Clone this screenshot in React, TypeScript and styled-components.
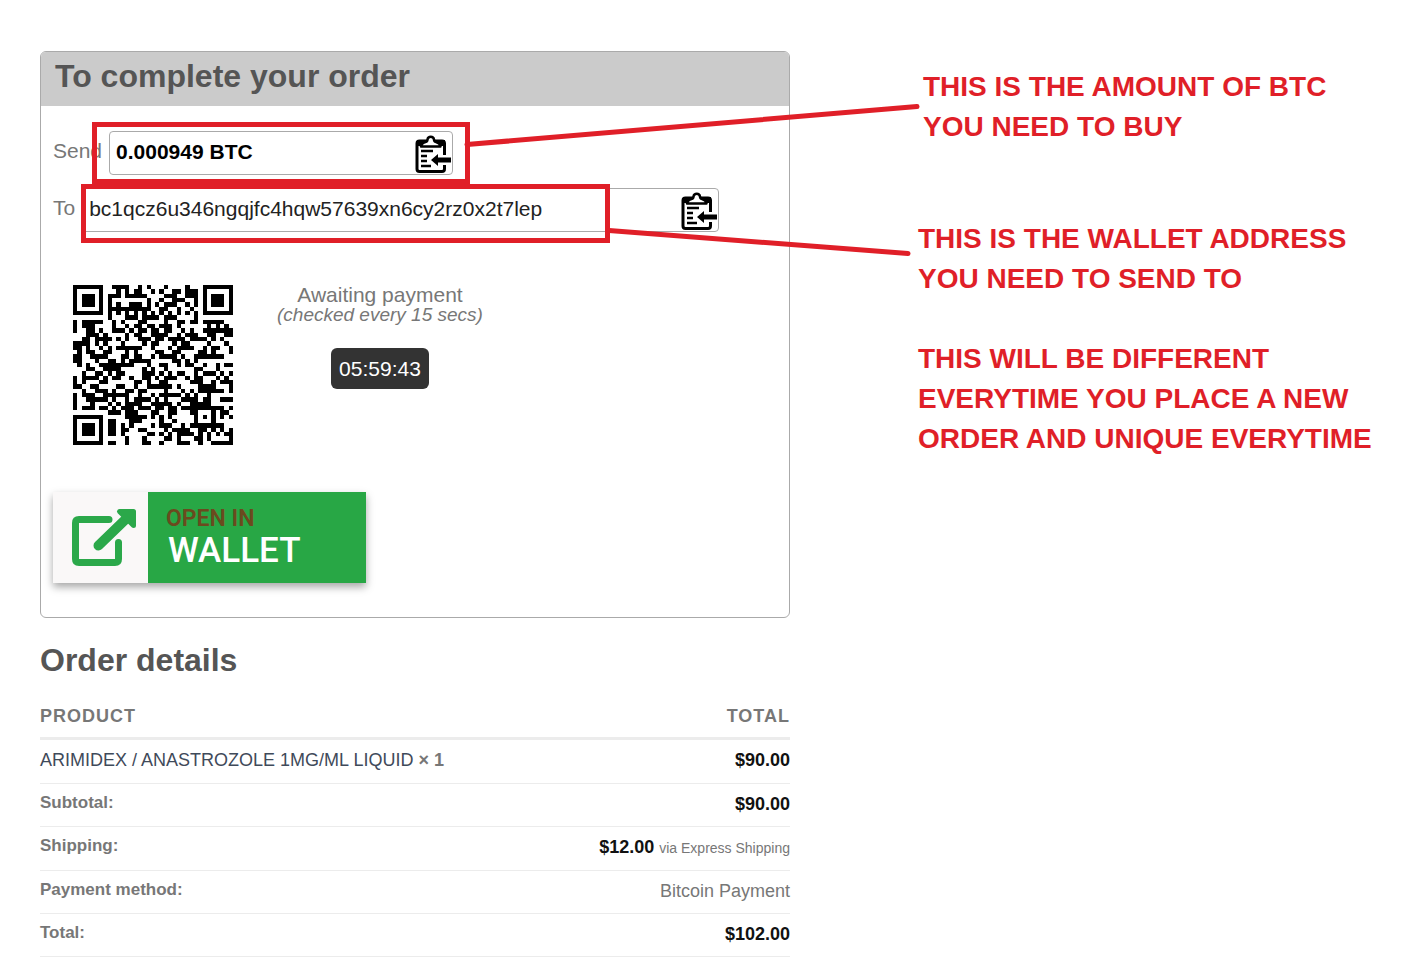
import React from 'react';
import styled, { createGlobalStyle } from 'styled-components';

const GlobalStyle = createGlobalStyle`
  *, *::before, *::after { box-sizing: border-box; }
  body {
    margin: 0;
    background: #fff;
    color: #777;
    font-family: "Liberation Sans", Arial, Helvetica, sans-serif;
  }
`;

const Page = styled.main`
  position: relative;
  display: flex;
  align-items: flex-start;
  gap: 128px;
  padding: 51px 0 10px 40px;
`;

const OrderColumn = styled.div`
  flex: 0 1 750px;
  min-width: 0;
`;

const Card = styled.section`
  border: 1px solid #aaa;
  border-radius: 6px;
  overflow: hidden;
`;

const Heading = styled.h2`
  margin: 0;
  font-size: 32px;
  line-height: 36px;
  font-weight: 700;
  color: #555;
`;

const CardHeader = styled.header`
  padding: 6px 14px 12px;
  background: #cbcbcb;
`;

const CardBody = styled.div`
  padding: 25px 12px 34px;
`;

const FieldRow = styled.div`
  display: flex;
  align-items: center;
  gap: 7px;
  margin-bottom: 13px;
`;

const FieldLabel = styled.label`
  font-size: 21px;
  line-height: 24px;
  padding-bottom: 4px;
`;

const FieldBox = styled.div<{ $width: number }>`
  display: flex;
  align-items: center;
  flex: 0 1 ${(p) => p.$width}px;
  min-width: 0;
  height: 44px;
  border: 1px solid #aaa;
  border-radius: 4px;
`;

const FieldInput = styled.input<{ $strong?: boolean }>`
  flex: 1;
  min-width: 0;
  height: 42px;
  border: 0;
  padding: 0 0 3px 6px;
  background: transparent;
  color: ${(p) => (p.$strong ? '#000' : '#222')};
  font: ${(p) => (p.$strong ? 700 : 400)} 21px "Liberation Sans", Arial, sans-serif;
`;

const CopyButton = styled.button`
  display: flex;
  border: 0;
  padding: 2px 0 0;
  background: none;
  cursor: pointer;
`;

const PaymentRow = styled.div`
  display: flex;
  align-items: flex-start;
  gap: 44px;
  padding: 40px 20px 47px;
`;

const Status = styled.div`
  display: flex;
  flex-direction: column;
  align-items: center;
  font-size: 21px;
  line-height: 20px;

  em { font-size: 19px; }
`;

const Countdown = styled.time`
  margin-top: 23px;
  padding: 11px 8px 10px;
  border-radius: 6px;
  background: #333;
  color: #fff;
`;

const WalletLink = styled.a`
  display: inline-flex;
  vertical-align: top;
  height: 91px;
  background: #28a745;
  box-shadow: 0 4px 8px rgba(0, 0, 0, 0.35);
  text-decoration: none;
  font-family: Roboto, sans-serif;
  font-weight: 500;
`;

const WalletIcon = styled.span`
  display: flex;
  padding: 16px 11px 0 18px;
  background: #faf8f8;
`;

const WalletText = styled.span`
  display: flex;
  flex-direction: column;
  width: 218px;
  padding: 15px 18px;
`;

const WalletSmall = styled.span`
  font-size: 23px;
  line-height: 24px;
  font-weight: 600;
  color: #6b4a1e;
`;

const WalletBig = styled.span`
  padding-left: 2px;
  font-size: 35px;
  line-height: 40px;
  color: #fff;
`;

const Details = styled.section`
  padding-top: 24px;
`;

const Table = styled.table`
  width: 100%;
  margin-top: 18px;
  border-collapse: separate;
  border-spacing: 0;
  font-size: 18px;
  line-height: 22px;

  td, th { vertical-align: top; }
`;

const HeadCell = styled.th<{ $end?: boolean }>`
  padding: 9px 0 10px;
  border-bottom: 3px solid #ececec;
  text-align: ${(p) => (p.$end ? 'right' : 'left')};
  letter-spacing: 1px;
`;

const ItemCell = styled.td<{ $first?: boolean }>`
  padding: 9px 0 ${(p) => (p.$first ? 12 : 11)}px;
  border-bottom: 1px solid #ececec;

  a { color: #3f4a5a; text-decoration: none; }
`;

const LabelCell = styled.th`
  padding: 8px 0 12px;
  border-bottom: 1px solid #ececec;
  text-align: left;
  font-size: 17px;
`;

const ValueCell = styled(ItemCell)`
  text-align: right;

  b { color: #111; }
  small { font-size: 14px; }
`;

const Notes = styled.aside`
  flex: 1 1 0;
  min-width: 0;
  padding-top: 16px;
  font-weight: 700;
  font-size: 28px;
  line-height: 40px;
  color: #e01f28;
  white-space: nowrap;
`;

const Note = styled.p<{ $gap: number; $indent?: boolean }>`
  margin: 0 0 ${(p) => p.$gap}px;
  padding-left: ${(p) => (p.$indent ? 5 : 0)}px;
`;

const Markup = styled.svg`
  position: absolute;
  top: 0;
  left: 0;
  pointer-events: none;
`;

/* QR version 5, error correction level M, mask 2. */
const SIZE = 37;
const DATA_WORDS = 86;
const BLOCK_WORDS = 43;
const EC_WORDS = 24;
const FORMAT_BITS = '101111001111100';

function multiply(a: number, b: number) {
  let product = 0;
  for (let i = 7; i >= 0; i--) {
    product = (product << 1) ^ ((product >>> 7) * 0x11d);
    product ^= ((b >>> i) & 1) * a;
  }
  return product;
}

function errorWords(data: number[]) {
  const divisor: number[] = new Array(EC_WORDS).fill(0);
  divisor[EC_WORDS - 1] = 1;
  let root = 1;
  for (let i = 0; i < EC_WORDS; i++) {
    for (let j = 0; j < EC_WORDS; j++) {
      divisor[j] = multiply(divisor[j], root);
      if (j + 1 < EC_WORDS) divisor[j] ^= divisor[j + 1];
    }
    root = multiply(root, 2);
  }
  const rest: number[] = new Array(EC_WORDS).fill(0);
  data.forEach((word) => {
    const factor = word ^ (rest.shift() as number);
    rest.push(0);
    divisor.forEach((d, i) => { rest[i] ^= multiply(d, factor); });
  });
  return rest;
}

function encodeQr(text: string) {
  let bits = '0100' + text.length.toString(2).padStart(8, '0');
  for (const ch of text) bits += ch.charCodeAt(0).toString(2).padStart(8, '0');
  bits += '0000';
  const words: number[] = [];
  for (let i = 0; i < bits.length; i += 8) words.push(parseInt(bits.slice(i, i + 8), 2));
  for (let pad = 0xec; words.length < DATA_WORDS; pad ^= 0xec ^ 0x11) words.push(pad);

  const blocks = [words.slice(0, BLOCK_WORDS), words.slice(BLOCK_WORDS)];
  const checks = blocks.map(errorWords);
  const stream: number[] = [];
  for (let i = 0; i < BLOCK_WORDS; i++) blocks.forEach((b) => stream.push(b[i]));
  for (let i = 0; i < EC_WORDS; i++) checks.forEach((b) => stream.push(b[i]));

  const grid: (boolean | null)[][] = Array.from({ length: SIZE }, () => new Array(SIZE).fill(null));
  const set = (x: number, y: number, on: boolean) => {
    if (x >= 0 && y >= 0 && x < SIZE && y < SIZE) grid[y][x] = on;
  };
  for (let i = 0; i < SIZE; i++) {
    set(6, i, i % 2 === 0);
    set(i, 6, i % 2 === 0);
  }
  [[3, 3], [33, 3], [3, 33]].forEach(([cx, cy]) => {
    for (let dy = -4; dy <= 4; dy++) {
      for (let dx = -4; dx <= 4; dx++) {
        const d = Math.max(Math.abs(dx), Math.abs(dy));
        set(cx + dx, cy + dy, d !== 2 && d !== 4);
      }
    }
  });
  for (let dy = -2; dy <= 2; dy++) {
    for (let dx = -2; dx <= 2; dx++) {
      set(30 + dx, 30 + dy, Math.max(Math.abs(dx), Math.abs(dy)) !== 1);
    }
  }
  const format = (i: number) => FORMAT_BITS[14 - i] === '1';
  for (let i = 0; i <= 5; i++) set(8, i, format(i));
  set(8, 7, format(6));
  set(8, 8, format(7));
  set(7, 8, format(8));
  for (let i = 9; i < 15; i++) set(14 - i, 8, format(i));
  for (let i = 0; i < 8; i++) set(SIZE - 1 - i, 8, format(i));
  for (let i = 8; i < 15; i++) set(8, SIZE - 15 + i, format(i));
  set(8, SIZE - 8, true);

  let n = 0;
  for (let right = SIZE - 1; right >= 1; right -= 2) {
    if (right === 6) right = 5;
    const up = ((right + 1) & 2) === 0;
    for (let v = 0; v < SIZE; v++) {
      const y = up ? SIZE - 1 - v : v;
      for (const x of [right, right - 1]) {
        if (grid[y][x] !== null) continue;
        const bit = n < stream.length * 8 && ((stream[n >>> 3] >>> (7 - (n & 7))) & 1) === 1;
        grid[y][x] = bit !== (x % 3 === 0);
        n++;
      }
    }
  }
  return grid;
}

function QrCode({ value }: { value: string }) {
  const path = encodeQr(value)
    .map((row, y) => row.map((cell, x) => (cell ? `M${x} ${y}h1v1h-1z` : '')).join(''))
    .join('');
  return (
    <svg width="160" height="160" viewBox="0 0 37 37" role="img" aria-label="Payment QR code" shapeRendering="crispEdges">
      <path d={path} fill="#000" />
    </svg>
  );
}

function ClipboardIcon() {
  return (
    <svg width="37" height="38" viewBox="0 0 37 38" fill="none" aria-hidden="true">
      <path d="M29.500 30v4q0 2.500-2.500 2.500H4.500Q2 36.500 2 34V8.500Q2 6 4.500 6H27q2.500 0 2.500 2.500V20" stroke="#000" strokeWidth="3" />
      <path d="M2 5h8v6H2zM21 5h9v6h-9z" fill="#000" />
      <path d="M6 11.500q.5-3.500 4.500-4.500q2-.5 2-2.500a3.300 3.300 0 0 1 6.500 0q0 2 2 2.500q4 1 4.500 4.500z" fill="#fff" stroke="#000" strokeWidth="2.500" strokeLinejoin="round" />
      <path d="M6 16h12M6 21h6M6 26h6M6 31h10" stroke="#000" strokeWidth="2.300" />
      <path d="M16 25l7-6v3.500h13v5H23V31z" fill="#000" />
    </svg>
  );
}

function OpenIcon() {
  return (
    <svg width="66" height="59" viewBox="0 0 66 59" fill="none" aria-hidden="true">
      <path d="M38 11.500H8q-3.500 0-3.500 3.500v36q0 3.500 3.500 3.500h36q3.500 0 3.500-3.500V34.500" stroke="#2ba84a" strokeWidth="7" strokeLinecap="round" />
      <path d="M27.500 37.500L56 10" stroke="#2ba84a" strokeWidth="10" strokeLinecap="round" />
      <path d="M48.500 3.500H62.500V17.500z" fill="#2ba84a" stroke="#2ba84a" strokeWidth="5" strokeLinejoin="round" />
    </svg>
  );
}

const AMOUNT = '0.000949';
const ADDRESS = 'bc1qcz6u346ngqjfc4hqw57639xn6cy2rz0x2t7lep';
const PAYMENT_URI = `bitcoin:${ADDRESS}?amount=${AMOUNT}`;

const TOTALS = [
  { label: 'Subtotal:', amount: '$90.00' },
  { label: 'Shipping:', amount: '$12.00', note: 'via Express Shipping' },
  { label: 'Payment method:', text: 'Bitcoin Payment' },
  { label: 'Total:', amount: '$102.00' },
];

export default function App() {
  return (
    <>
      <GlobalStyle />
      <Page>
        <OrderColumn>
          <Card>
            <CardHeader>
              <Heading>To complete your order</Heading>
            </CardHeader>
            <CardBody>
              <FieldRow>
                <FieldLabel htmlFor="amount">Send</FieldLabel>
                <FieldBox $width={344}>
                  <FieldInput id="amount" $strong readOnly defaultValue={`${AMOUNT} BTC`} />
                  <CopyButton type="button" aria-label="Copy amount"><ClipboardIcon /></CopyButton>
                </FieldBox>
              </FieldRow>
              <FieldRow>
                <FieldLabel htmlFor="address">To</FieldLabel>
                <FieldBox $width={637}>
                  <FieldInput id="address" readOnly defaultValue={ADDRESS} />
                  <CopyButton type="button" aria-label="Copy address"><ClipboardIcon /></CopyButton>
                </FieldBox>
              </FieldRow>
              <PaymentRow>
                <QrCode value={PAYMENT_URI} />
                <Status>
                  <span>Awaiting payment</span>
                  <em>(checked every 15 secs)</em>
                  <Countdown>05:59:43</Countdown>
                </Status>
              </PaymentRow>
              <WalletLink href={PAYMENT_URI}>
                <WalletIcon><OpenIcon /></WalletIcon>
                <WalletText>
                  <WalletSmall>OPEN IN</WalletSmall>
                  <WalletBig>WALLET</WalletBig>
                </WalletText>
              </WalletLink>
            </CardBody>
          </Card>
          <Details>
            <Heading>Order details</Heading>
            <Table>
              <thead>
                <tr>
                  <HeadCell scope="col">PRODUCT</HeadCell>
                  <HeadCell scope="col" $end>TOTAL</HeadCell>
                </tr>
              </thead>
              <tbody>
                <tr>
                  <ItemCell $first>
                    <a href="#product">ARIMIDEX / ANASTROZOLE 1MG/ML LIQUID</a> <b>× 1</b>
                  </ItemCell>
                  <ValueCell $first><b>$90.00</b></ValueCell>
                </tr>
                {TOTALS.map((row) => (
                  <tr key={row.label}>
                    <LabelCell scope="row">{row.label}</LabelCell>
                    <ValueCell>
                      {row.amount && <b>{row.amount}</b>}
                      {row.note && <> <small>{row.note}</small></>}
                      {row.text}
                    </ValueCell>
                  </tr>
                ))}
              </tbody>
            </Table>
          </Details>
        </OrderColumn>
        <Notes>
          <Note $gap={72} $indent>THIS IS THE AMOUNT OF BTC<br />YOU NEED TO BUY</Note>
          <Note $gap={40}>THIS IS THE WALLET ADDRESS<br />YOU NEED TO SEND TO</Note>
          <Note $gap={0}>THIS WILL BE DIFFERENT<br />EVERYTIME YOU PLACE A NEW<br />ORDER AND UNIQUE EVERYTIME</Note>
        </Notes>
        <Markup width="930" height="270" viewBox="0 0 930 270" fill="none" stroke="#e01f28" strokeWidth="5" aria-hidden="true">
          <path d="M94.500 124.500h373v57h-373zM83.500 186.500h524v54h-524z" />
          <path d="M467 144.500L917 106.500M609 230.500L908 253.500" strokeLinecap="round" />
        </Markup>
      </Page>
    </>
  );
}
